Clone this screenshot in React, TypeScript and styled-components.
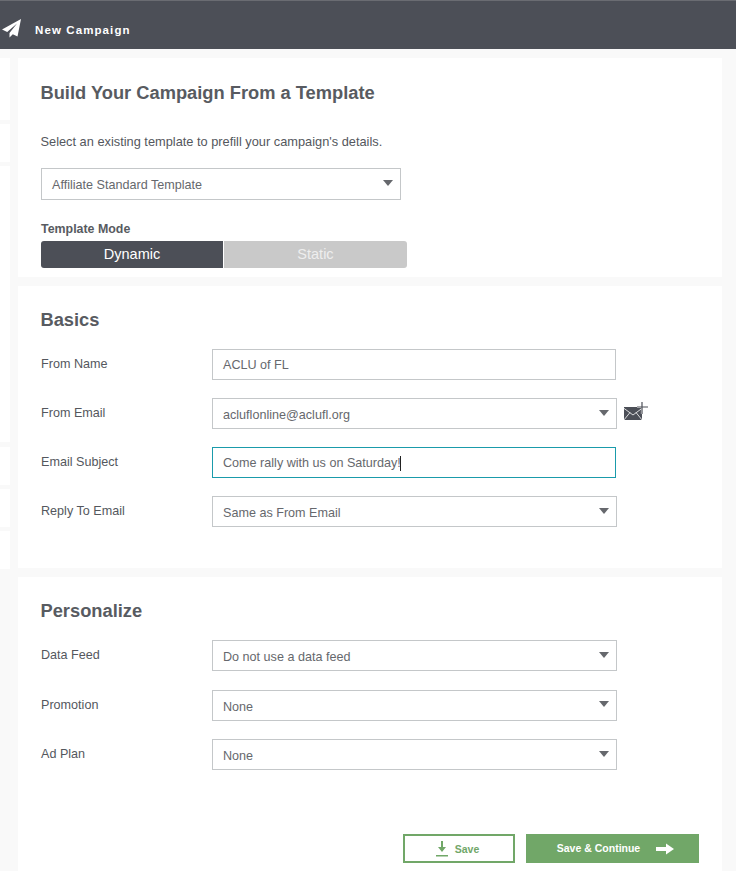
import React from 'react';
import styled, {createGlobalStyle} from 'styled-components';

const GlobalStyle = createGlobalStyle`
  html, body {
    margin: 0;
    padding: 0;
    background: #f9f9f9;
    font-family: "Liberation Sans", Arial, sans-serif;
    color: #54575d;
  }
  * {
    box-sizing: border-box;
  }
`

const Page = styled.div`
  width: 736px;
  height: 871px;
  overflow: hidden;
`

const TopBar = styled.header`
  height: 49px;
  background: #4c4f57;
  border-top: 1px solid #6a6c72;
  display: flex;
  align-items: center;
  padding: 8px 0 0 2px;
  color: #fff;
`

const PlaneSvg = styled.svg`
  margin-bottom: 3px;
`

const BarTitle = styled.span`
  margin-left: 13px;
  padding-top: 1px;
  font-size: 11.5px;
  font-weight: 700;
  letter-spacing: 1.1px;
`

const Content = styled.div`
  display: flex;
  gap: 8px;
  padding-top: 9px;
`

const Side = styled.aside`
  width: 10px;
  display: flex;
  flex-direction: column;
`

const SideBlock = styled.div<{$h: number; $gap: number}>`
  height: ${({$h}) => $h}px;
  margin-bottom: ${({$gap}) => $gap}px;
  background: #fff;
`

const Main = styled.main`
  width: 704px;
  display: flex;
  flex-direction: column;
  gap: 9px;
`

const Card = styled.section<{$h: number; $top: number}>`
  height: ${({$h}) => $h}px;
  padding: ${({$top}) => $top}px 0 0 23px;
  background: #fff;
`

const Title = styled.h2`
  margin: 0 0 0 -0.5px;
  font-size: 18.3px;
  line-height: 22px;
  font-weight: 700;
  color: #585b61;
`

const Intro = styled.p`
  margin: 30px 0 0 -0.5px;
  font-size: 12.8px;
  line-height: 16px;
  color: #54575d;
`

const Field = styled.div<{$w: number; $h?: number; $focus?: boolean}>`
  width: ${({$w}) => $w}px;
  height: ${({$h}) => $h ?? 31}px;
  display: flex;
  align-items: center;
  justify-content: space-between;
  padding: 1px 7px 0 10px;
  background: #fff;
  border: 1px solid ${({$focus}) => ($focus ? '#1a9bab' : '#c4c7c9')};
  font-size: 12.6px;
  color: #66686d;
`

const FieldText = styled.span<{$drop?: number}>`
  display: inline-flex;
  align-items: center;
  padding-top: ${({$drop}) => $drop ?? 0}px;
`

const Caret = styled.span`
  width: 1px;
  height: 15px;
  margin-left: -1px;
  background: #222;
`

const Arrow = styled.span`
  width: 0;
  height: 0;
  margin-bottom: 3px;
  border-left: 5.5px solid transparent;
  border-right: 5.5px solid transparent;
  border-top: 6px solid #66686d;
`

const TemplateSelect = styled.div`
  margin-top: 18px;
`

const ModeLabel = styled.div`
  margin-top: 21px;
  font-size: 12.4px;
  line-height: 16px;
  font-weight: 700;
  color: #585b61;
`

const Toggle = styled.div`
  width: 366px;
  height: 27px;
  margin-top: 4px;
  display: grid;
  grid-template-columns: 182px 183px;
  gap: 1px;
`

const ToggleItem = styled.div<{$active?: boolean}>`
  display: flex;
  align-items: center;
  justify-content: center;
  padding-bottom: 1px;
  font-size: 14.5px;
  color: ${({$active}) => ($active ? '#fff' : '#eeeeee')};
  background: ${({$active}) => ($active ? '#4c4f57' : '#c9c9c9')};
  border-radius: ${({$active}) => ($active ? '3px 0 0 3px' : '0 3px 3px 0')};
`

const Rows = styled.div<{$gap: number; $top: number}>`
  margin-top: ${({$top}) => $top}px;
  display: flex;
  flex-direction: column;
  gap: ${({$gap}) => $gap}px;
`

const Row = styled.div`
  display: flex;
  align-items: flex-start;
`

const Label = styled.label`
  width: 171px;
  padding-top: 7px;
  font-size: 12.6px;
  line-height: 16px;
  color: #54575d;
`

const MailIcon = styled.svg`
  margin: 3px 0 0 6px;
`

const Actions = styled.div`
  margin-top: 64px;
  padding-right: 23px;
  display: flex;
  justify-content: flex-end;
  gap: 11px;
`

const SaveButton = styled.button`
  width: 112px;
  height: 29px;
  display: flex;
  align-items: center;
  justify-content: center;
  gap: 7px;
  padding: 0 3px 0 0;
  background: #fff;
  border: 2px solid #71a768;
  color: #71a768;
  font-family: inherit;
  font-size: 10.5px;
  font-weight: 700;
`

const ButtonLabel = styled.span<{$lift: number}>`
  margin-bottom: ${({$lift}) => $lift}px;
`

const ContinueButton = styled.button`
  width: 173px;
  height: 29px;
  display: flex;
  align-items: center;
  justify-content: center;
  gap: 16px;
  padding: 0 0 0 6px;
  background: #71a768;
  border: 0;
  color: #fff;
  font-family: inherit;
  font-size: 10.5px;
  font-weight: 700;
`

const PlaneIcon = () => (
  <PlaneSvg width="20" height="20" viewBox="0 0 20 20">
    <path d="M19 1 L0 11.5 L5.2 14 L15 5.5 L7.5 15 L7.5 19.5 L10.8 16.3 L15.5 18.5 Z" fill="#fff"/>
  </PlaneSvg>
)

const SelectField = ({w, h, drop = 2, text}: {w: number; h?: number; drop?: number; text: string}) => (
  <Field $w={w} $h={h}>
    <FieldText $drop={drop}>{text}</FieldText>
    <Arrow/>
  </Field>
)

export default function App() {
  return (
    <Page>
      <GlobalStyle/>
      <TopBar>
        <PlaneIcon/>
        <BarTitle>New Campaign</BarTitle>
      </TopBar>
      <Content>
        <Side>
          <SideBlock $h={62} $gap={4}/>
          <SideBlock $h={38} $gap={4}/>
          <SideBlock $h={276} $gap={5}/>
          <SideBlock $h={38} $gap={4}/>
          <SideBlock $h={38} $gap={4}/>
          <SideBlock $h={38} $gap={0}/>
        </Side>
        <Main>
          <Card $h={219} $top={24}>
            <Title>Build Your Campaign From a Template</Title>
            <Intro>Select an existing template to prefill your campaign's details.</Intro>
            <TemplateSelect>
              <SelectField w={360} h={32} drop={0} text="Affiliate Standard Template"/>
            </TemplateSelect>
            <ModeLabel>Template Mode</ModeLabel>
            <Toggle>
              <ToggleItem $active>Dynamic</ToggleItem>
              <ToggleItem>Static</ToggleItem>
            </Toggle>
          </Card>
          <Card $h={282} $top={23}>
            <Title>Basics</Title>
            <Rows $gap={18} $top={18}>
              <Row>
                <Label>From Name</Label>
                <Field $w={404}><FieldText>ACLU of FL</FieldText></Field>
              </Row>
              <Row>
                <Label>From Email</Label>
                <SelectField w={405} text="acluflonline@aclufl.org"/>
                <MailIcon width="26" height="20" viewBox="0 0 26 20">
                  <path d="M1 6 H19 V19 H1 Z" fill="#4c4f57"/>
                  <path d="M0.5 7 L10 14 L19.5 7 M0.5 19.5 L7 11.5 M19.5 19.5 L13 11.5" stroke="#fff" strokeWidth="0.8" fill="none"/>
                  <path d="M19 2 V13 M14 6 H24" stroke="#fff" strokeWidth="2.2" fill="none"/>
                  <path d="M19 1 V13 M14 6 H25" stroke="#4c4f57" strokeWidth="1.2" fill="none"/>
                </MailIcon>
              </Row>
              <Row>
                <Label>Email Subject</Label>
                <Field $w={404} $focus>
                  <FieldText>Come rally with us on Saturday!<Caret/></FieldText>
                </Field>
              </Row>
              <Row>
                <Label>Reply To Email</Label>
                <SelectField w={405} text="Same as From Email"/>
              </Row>
            </Rows>
          </Card>
          <Card $h={294} $top={23}>
            <Title>Personalize</Title>
            <Rows $gap={18.5} $top={18}>
              <Row>
                <Label>Data Feed</Label>
                <SelectField w={405} text="Do not use a data feed"/>
              </Row>
              <Row>
                <Label>Promotion</Label>
                <SelectField w={405} text="None"/>
              </Row>
              <Row>
                <Label>Ad Plan</Label>
                <SelectField w={405} text="None"/>
              </Row>
            </Rows>
            <Actions>
              <SaveButton>
                <svg width="12" height="16" viewBox="0 0 12 16">
                  <path d="M5 0 H7 V6 H10 L6 11 L2 6 H5 Z M0 14 H12 V15.5 H0 Z" fill="#71a768"/>
                </svg>
                <ButtonLabel $lift={0}>Save</ButtonLabel>
              </SaveButton>
              <ContinueButton>
                <ButtonLabel $lift={1}>Save &amp; Continue</ButtonLabel>
                <svg width="18" height="12" viewBox="0 0 18 12">
                  <path d="M0 4 H10 V0.5 L18 6 L10 11.5 V8 H0 Z" fill="#fff"/>
                </svg>
              </ContinueButton>
            </Actions>
          </Card>
        </Main>
      </Content>
    </Page>
  );
}
